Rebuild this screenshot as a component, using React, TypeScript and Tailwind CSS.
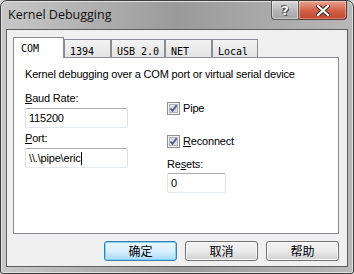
import React from 'react'

/**
 * Kernel Debugging dialog (Windows 7 basic theme)
 */

const ui = "font-['Liberation_Sans',Arial,sans-serif] text-[11px] leading-[14px] tracking-[-0.18px] text-black"

function TitleButtons() {
  return (
    <div className="flex h-[19px] self-start">
      {/* help */}
      <div className="w-[28px] h-[19px] rounded-bl-[4px] border border-t-0 border-[#5d5d5d] bg-gradient-to-b from-[#d9d9d9] via-[#b9b9b9] to-[#a3a3a3] flex items-center justify-center shadow-[inset_0_0_0_1px_rgba(255,255,255,0.45)]">
        <span className="font-['DejaVu_Sans',sans-serif] font-bold text-[13px] leading-none text-white [text-shadow:0_0_1px_#333,1px_1px_0_#444,-1px_-1px_0_#555]">?</span>
      </div>
      {/* close */}
      <div className="w-[48px] h-[19px] rounded-br-[4px] border border-l-0 border-t-0 border-[#5d3a32] bg-gradient-to-b from-[#e8a593] via-[#d2634b] to-[#c2432b] flex items-center justify-center shadow-[inset_0_0_0_1px_rgba(255,255,255,0.35)]">
        <svg width="14" height="11" viewBox="0 0 14 11">
          <path d="M2 1 L12 10 M12 1 L2 10" stroke="#3a2a28" strokeWidth="4.2" strokeLinecap="square" />
          <path d="M2 1 L12 10 M12 1 L2 10" stroke="#ffffff" strokeWidth="2.2" strokeLinecap="square" />
        </svg>
      </div>
    </div>
  )
}

function Tab({ label, active, w }: { label: string; active?: boolean; w: string }) {
  if (active) {
    return (
      <div className={`${w} h-[21px] -mb-px relative z-10 bg-white border border-b-0 border-[#898c95] pl-[7px] pt-[3px]`}>
        <span className="font-['DejaVu_Sans_Mono',monospace] text-[10px] leading-[12px] tracking-normal">{label}</span>
      </div>
    )
  }
  return (
    <div className={`${w} h-[18px] bg-gradient-to-b from-[#f3f3f3] to-[#e3e3e3] border border-b-0 border-[#898c95] pl-[5px] pt-[4px]`}>
      <span className="font-['DejaVu_Sans_Mono',monospace] text-[10px] leading-[12px] tracking-normal">{label}</span>
    </div>
  )
}

function Field({ value, w, caret }: { value: string; w: string; caret?: boolean }) {
  return (
    <div className={`${w} h-[20px] rounded-[2px] border border-[#abadb3] border-l-[#e2e3ea] border-r-[#dbdfe6] border-b-[#e3e9ef] bg-white flex items-center px-[3px]`}>
      <span>{value}</span>
      {caret && <span className="w-px h-[13px] bg-black ml-px" />}
    </div>
  )
}

function Check({ children }: { children: React.ReactNode }) {
  return (
    <div className="flex items-center h-[14px] gap-[3px]">
      <svg width="13" height="13" viewBox="0 0 13 13">
        <rect x="0.5" y="0.5" width="12" height="12" fill="#f4f4f4" stroke="#8e8f8f" />
        <rect x="2.5" y="2.5" width="8" height="8" fill="#dcdde0" stroke="#b1b4b9" />
        <path d="M3.5 6.5 L5.5 8.8 L9.6 3.4" fill="none" stroke="#4a5f97" strokeWidth="1.8" />
      </svg>
      <span>{children}</span>
    </div>
  )
}

function Btn({ children, primary }: { children: React.ReactNode; primary?: boolean }) {
  return (
    <div
      className={
        primary
          ? "w-[73px] h-[20px] rounded-[3px] border border-[#3c7fb1] bg-gradient-to-b from-[#eaf6fd] via-[#d9f0fc] to-[#a7d9f5] shadow-[inset_0_0_0_1px_#7fd0f5] flex items-center justify-center"
          : "w-[73px] h-[20px] rounded-[3px] border border-[#707070] bg-gradient-to-b from-[#f2f2f2] via-[#ebebeb] to-[#cfcfcf] shadow-[inset_0_0_0_1px_#fbfbfb] flex items-center justify-center"
      }
    >
      <span className="font-['Noto_Sans_CJK_SC',sans-serif] text-[12px] leading-none tracking-normal">{children}</span>
    </div>
  )
}

export default function App() {
  return (
    <div className="w-[354px] h-[274px] bg-[#d7d7d7]">
      <div className="w-[354px] h-[274px] flex flex-col rounded-t-[7px] rounded-b-[3px] border border-[#3d3d3d] bg-gradient-to-r from-[#c8c8c8] via-[#9a9a9a] to-[#b8b8b8] shadow-[inset_0_0_0_1px_#e2e2e2]">
        {/* title bar */}
        <div className="h-[28px] flex justify-between pr-[6px]">
          <div className="pl-[7px] pt-[6px] font-['Open_Sans',sans-serif] text-[12.5px] leading-[16px] text-[#111]">
            Kernel Debugging
          </div>
          <TitleButtons />
        </div>

        {/* client area */}
        <div className={`mx-[5px] mb-[6px] flex-1 border border-[#5e5e5e] bg-[#f0f0f0] pl-[6px] pt-[6px] ${ui}`}>
          {/* tabs */}
          <div className="flex items-end h-[21px]">
            <Tab label="COM" active w="w-[51px]" />
            <Tab label="1394" w="w-[47px]" />
            <Tab label="USB 2.0" w="w-[54px]" />
            <Tab label="NET" w="w-[47px]" />
            <Tab label="Local" w="w-[46px]" />
          </div>

          {/* panel */}
          <div className="w-[326px] h-[177px] border border-[#898c95] bg-white pl-[11px] pt-[9px]">
            <div>Kernel debugging over a COM port or virtual serial device</div>

            <div className="flex mt-[10px]">
              <div className="w-[103px] flex flex-col">
                <div><span className="underline">B</span>aud Rate:</div>
                <div className="mt-[3px]"><Field value="115200" w="w-[103px]" /></div>
                <div className="mt-[3px]"><span className="underline">P</span>ort:</div>
                <div className="mt-[3px]"><Field value="\\.\pipe\eric" w="w-[103px]" caret /></div>
              </div>

              <div className="ml-[39px] flex flex-col pt-[10px]">
                <Check>Pipe</Check>
                <div className="mt-[19px]">
                  <Check><span className="underline">R</span>econnect</Check>
                </div>
                <div className="mt-[9px]">Re<span className="underline">s</span>ets:</div>
                <div className="mt-[2px]"><Field value="0" w="w-[59px]" /></div>
              </div>
            </div>
          </div>

          {/* buttons */}
          <div className="w-[326px] flex justify-end gap-[8px] mt-[7px]">
            <Btn primary>确定</Btn>
            <Btn>取消</Btn>
            <Btn>帮助</Btn>
          </div>
        </div>
      </div>
    </div>
  )
}
